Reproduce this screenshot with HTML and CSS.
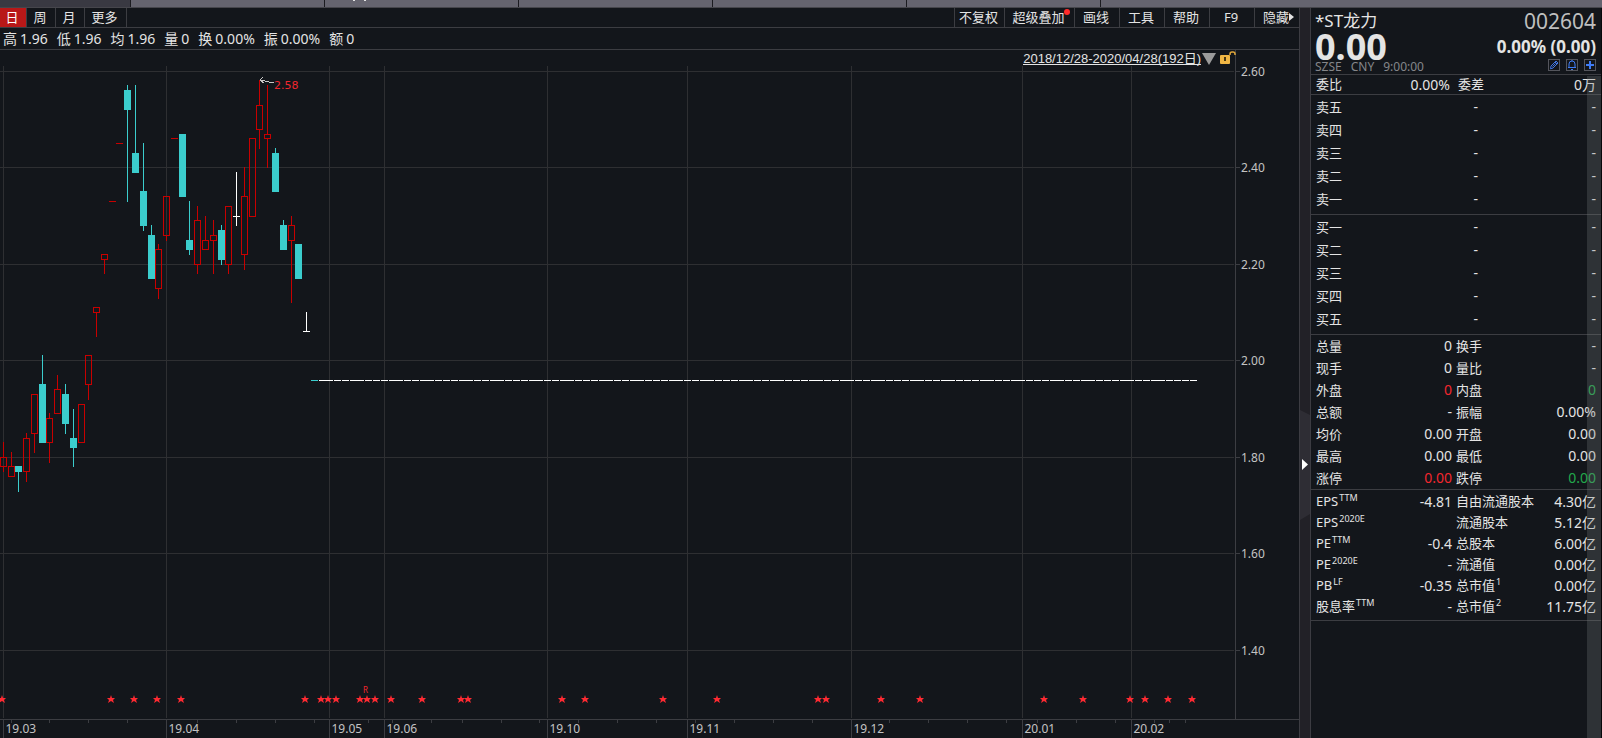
FILE: index.html
```html
<!DOCTYPE html>
<html lang="zh-CN">
  <head>
    <meta charset="UTF-8" />
    <meta name="viewport" content="width=device-width, initial-scale=1.0" />
    <title>*ST龙力 002604</title>
    <link rel="stylesheet" href="styles.css">
  </head>
  <body>
    <div class="strip">
      <span class="strip-tab first"></span>
      <span class="strip-tab"></span>
      <span class="strip-tab marked"></span>
      <span class="strip-tab"></span>
      <span class="strip-tab"></span>
      <span class="strip-tab"></span>
      <span class="strip-rest"></span>
    </div>

    <div class="workspace">
      <main class="chart-pane">
        <nav class="toolbar">
          <button type="button" class="tab active">日</button>
          <button type="button" class="tab">周</button>
          <button type="button" class="tab">月</button>
          <button type="button" class="tab wide">更多</button>
          <span class="spacer"></span>
          <button type="button" class="tool medium">不复权</button>
          <button type="button" class="tool large">超级叠加<i class="dot"></i></button>
          <button type="button" class="tool">画线</button>
          <button type="button" class="tool">工具</button>
          <button type="button" class="tool">帮助</button>
          <button type="button" class="tool">F9</button>
          <button type="button" class="tool">隐藏<i class="caret"></i></button>
        </nav>

        <div class="quote-line">
          <span>高<b>1.96</b></span>
          <span>低<b>1.96</b></span>
          <span>均<b>1.96</b></span>
          <span>量<b>0</b></span>
          <span>换<b>0.00%</b></span>
          <span>振<b>0.00%</b></span>
          <span>额<b>0</b></span>
        </div>

        <div class="chart">
          <svg id="kline" class="kline"></svg>
          <div class="range">
            <a href="#">2018/12/28-2020/04/28(192日)</a>
            <svg class="range-arrow" width="14" height="12" viewBox="0 0 14 12">
              <path d="M0 0h14L7 12z" fill="#9b9b9b" />
            </svg>
            <svg class="lock" width="16" height="14" viewBox="0 0 16 14">
              <path d="M10 4V3Q10 1 12 1h1q2 0 2 2v1" fill="none" stroke="#e0a63a" stroke-width="1.5" />
              <rect x="0" y="4" width="10" height="9" rx="1" fill="#f0b644" />
              <path d="M4 6h2v4h-2z" fill="#4a3813" />
            </svg>
          </div>
        </div>
      </main>

      <button type="button" class="splitter" aria-label="收起">
        <svg width="10" height="110" viewBox="0 0 10 110">
          <path d="M0 0l10 5v99l-10 6z" fill="#2e2d34" />
          <path d="M2 49l6 5.500-6 5.500z" fill="#fff" />
        </svg>
      </button>

      <aside class="panel">
        <header class="stock">
          <div class="stock-row">
            <h1>*ST龙力</h1>
            <span class="code">002604</span>
          </div>
          <div class="stock-row price-row">
            <strong class="price">0.00</strong>
            <strong class="change">0.00% (0.00)</strong>
          </div>
          <div class="stock-row meta-row">
            <div class="meta"><span>SZSE</span><span>CNY</span><span>9:00:00</span></div>
            <div class="actions">
              <button type="button" aria-label="编辑">
                <svg width="10" height="10" viewBox="0 0 10 10"><path d="M2 6l5-5 2 2-5 5-2.500.8zM6 2l2 2M3.500 6.500l3-3" fill="none" stroke="#3f74e0" /></svg>
              </button>
              <button type="button" aria-label="提醒">
                <svg width="10" height="10" viewBox="0 0 10 10"><path d="M1 7.500h8M2 7.500V4a3 3 0 0 1 6 0v3.500M4 9.500h2M5 0v1" fill="none" stroke="#3f7cf5" /></svg>
              </button>
              <button type="button" aria-label="添加">
                <svg width="10" height="10" viewBox="0 0 10 10"><path d="M1 5h8M5 1v8" fill="none" stroke="#3f7cf5" stroke-width="2" /></svg>
              </button>
            </div>
          </div>
        </header>

        <table class="ratio">
          <tr><th>委比</th><td>0.00%</td><th>委差</th><td>0万</td></tr>
        </table>

        <table class="book">
          <tr><th>卖五</th><td>-</td><td>-</td></tr>
          <tr><th>卖四</th><td>-</td><td>-</td></tr>
          <tr><th>卖三</th><td>-</td><td>-</td></tr>
          <tr><th>卖二</th><td>-</td><td>-</td></tr>
          <tr><th>卖一</th><td>-</td><td>-</td></tr>
        </table>

        <table class="book">
          <tr><th>买一</th><td>-</td><td>-</td></tr>
          <tr><th>买二</th><td>-</td><td>-</td></tr>
          <tr><th>买三</th><td>-</td><td>-</td></tr>
          <tr><th>买四</th><td>-</td><td>-</td></tr>
          <tr><th>买五</th><td>-</td><td>-</td></tr>
        </table>

        <table class="stats">
          <tr><th>总量</th><td>0</td><th>换手</th><td>-</td></tr>
          <tr><th>现手</th><td>0</td><th>量比</th><td>-</td></tr>
          <tr><th>外盘</th><td class="up">0</td><th>内盘</th><td class="down">0</td></tr>
          <tr><th>总额</th><td>-</td><th>振幅</th><td>0.00%</td></tr>
          <tr><th>均价</th><td>0.00</td><th>开盘</th><td>0.00</td></tr>
          <tr><th>最高</th><td>0.00</td><th>最低</th><td>0.00</td></tr>
          <tr><th>涨停</th><td class="up">0.00</td><th>跌停</th><td class="down">0.00</td></tr>
        </table>

        <table class="stats finance">
          <tr><th>EPS<sup>TTM</sup></th><td>-4.81</td><th>自由流通股本</th><td>4.30亿</td></tr>
          <tr><th>EPS<sup>2020E</sup></th><td></td><th>流通股本</th><td>5.12亿</td></tr>
          <tr><th>PE<sup>TTM</sup></th><td>-0.4</td><th>总股本</th><td>6.00亿</td></tr>
          <tr><th>PE<sup>2020E</sup></th><td>-</td><th>流通值</th><td>0.00亿</td></tr>
          <tr><th>PB<sup>LF</sup></th><td>-0.35</td><th>总市值<sup>1</sup></th><td>0.00亿</td></tr>
          <tr><th>股息率<sup>TTM</sup></th><td>-</td><th>总市值<sup>2</sup></th><td>11.75亿</td></tr>
        </table>

        <div class="scrollbar"></div>
      </aside>
    </div>

    <script src="chart.js"></script>
  </body>
</html>
```

FILE: styles.css
```css
* {
  margin: 0;
  padding: 0;
  box-sizing: border-box;
}

body {
  display: flex;
  flex-direction: column;
  height: 100vh;
  overflow: hidden;
  background: #13161b;
  color: #e4e4e4;
  font-family: "Noto Sans", "Noto Sans CJK SC", sans-serif;
  font-size: 13px;
}

button {
  background: none;
  border: none;
  color: inherit;
  font: inherit;
  cursor: pointer;
}

/* window strip */
.strip {
  display: flex;
  flex: none;
  height: 8px;
  background: #65646f;
  border-bottom: 1px solid #46464c;
}

.strip-tab {
  width: 194px;
  border-right: 1px solid #1b1b20;
}

.strip-tab.first {
  width: 131px;
  background: #393942;
}

.strip-tab.marked {
  background: linear-gradient(#e4e4e4, #e4e4e4) 28px 0 / 2px 1px no-repeat,
    linear-gradient(#e4e4e4, #e4e4e4) 39px 0 / 2px 1px no-repeat;
}

.strip-rest {
  flex: 1;
}

.workspace {
  display: flex;
  flex: 1;
  min-height: 0;
}

.chart-pane {
  display: flex;
  flex-direction: column;
  flex: 1;
  min-width: 0;
  border-right: 1px solid #3c3c42;
}

/* toolbar */
.toolbar {
  display: flex;
  height: 20px;
  border-bottom: 1px solid #3c3d42;
}

.toolbar button {
  position: relative;
  padding-right: 2px;
  line-height: 19px;
  white-space: nowrap;
}

.tab {
  width: 29px;
  border-right: 1px solid #3c3d42;
}

.tab.active {
  width: 27px;
  background: #b81818;
  color: #fff;
}

.tab.wide {
  width: 42px;
}

.spacer {
  flex: 1;
}

.tool {
  width: 45px;
  border-left: 1px solid #3c3d42;
}

.tool.medium {
  width: 50px;
}

.tool.large {
  width: 70px;
}

.dot {
  position: absolute;
  top: 1px;
  right: 4px;
  width: 6px;
  height: 6px;
  border-radius: 50%;
  background: #ff2a2a;
}

.caret {
  position: absolute;
  top: 5px;
  right: 5px;
  border: 4px solid transparent;
  border-left: 5px solid #e4e4e4;
  border-right: 0;
}

.quote-line {
  display: flex;
  gap: 9px;
  height: 22px;
  padding-left: 3px;
  border-bottom: 1px solid #3c3d42;
  font-size: 14px;
  line-height: 21px;
}

.quote-line b {
  margin-left: 3px;
  font-weight: normal;
}

/* chart */
.chart {
  position: relative;
  flex: 1;
  min-height: 0;
}

.kline {
  display: block;
  width: 100%;
  height: 100%;
  shape-rendering: crispEdges;
}

.kline text {
  fill: #c3c3c3;
  font-size: 12px;
}

.kline .peak {
  fill: #f2262e;
  font-family: "DejaVu Sans", sans-serif;
  font-size: 11px;
}

.kline .event {
  fill: #f2262e;
  font-size: 8px;
}

.grid {
  stroke: #2e2f32;
}

.axis {
  stroke: #3c3d42;
}

.rise {
  stroke: #c80000;
  fill: none;
}

.fall {
  stroke: #3bcdcd;
  fill: #3bcdcd;
}

.flat {
  stroke: #fff;
  fill: #fff;
}

.star {
  fill: #ff2a32;
  shape-rendering: auto;
}

.pointer {
  stroke: #c8c8c8;
  fill: none;
}

.range {
  position: absolute;
  top: 1px;
  right: 63px;
  display: flex;
  align-items: flex-start;
}

.range a {
  border-bottom: 1px solid #e4e4e4;
  color: #e4e4e4;
  font-family: "Liberation Sans", "Noto Sans CJK SC", sans-serif;
  line-height: 16px;
  height: 14px;
  text-decoration: none;
}

.range-arrow {
  margin: 2px 4px 0 1px;
}

/* splitter */
.splitter {
  display: flex;
  align-items: flex-end;
  width: 10px;
  padding-bottom: 218px;
  background: #222127;
}

/* right panel */
.panel {
  position: relative;
  flex: none;
  width: 292px;
  border-left: 1px solid #3c3c42;
  border-right: 1px solid #08090b;
}

.stock {
  height: 67px;
  padding: 0 5px 0 4px;
  border-bottom: 1px solid #3c3d42;
}

.stock-row {
  display: flex;
  justify-content: space-between;
}

.stock h1 {
  font-size: 17px;
  font-weight: normal;
  line-height: 25px;
}

.code {
  color: #bfbfbf;
  font-size: 21px;
  line-height: 27px;
}

.price-row {
  height: 24px;
  align-items: center;
}

.price {
  font-size: 36px;
  line-height: 24px;
}

.change {
  font-size: 17px;
  line-height: 20px;
}

.meta-row {
  height: 16px;
  align-items: center;
}

.meta {
  display: flex;
  gap: 9px;
  color: #85868a;
  font-size: 12px;
  line-height: 16px;
}

.actions {
  display: flex;
  gap: 6px;
  align-self: flex-start;
}

.actions button {
  display: flex;
  width: 12px;
  height: 12px;
  border: 1px solid #54555c;
}

table {
  width: 100%;
  border-collapse: collapse;
}

th {
  font-weight: normal;
  text-align: left;
  white-space: nowrap;
}

td {
  font-size: 14px;
  text-align: right;
  white-space: nowrap;
}

th:first-child {
  padding-left: 5px;
}

td:last-child {
  padding-right: 5px;
}

.ratio,
.book,
.stats {
  display: block;
  border-bottom: 1px solid #3c3d42;
}

.ratio tr,
.book tr,
.stats tr {
  display: grid;
  grid-template-columns: 70px 71px 1fr 60px;
  align-items: center;
}

tbody {
  display: block;
}

.ratio tr {
  height: 19px;
  grid-template-columns: 70px 69px 1fr 60px;
  line-height: 19px;
}

.ratio th:nth-child(3) {
  padding-left: 8px;
}

.book {
  padding: 0 0 4px;
}

.book tr {
  height: 23px;
  grid-template-columns: 70px 97px 1fr;
  line-height: 22px;
}

.book td {
  line-height: 24px;
}

.stats tr {
  height: 22px;
  line-height: 22px;
}

.stats th:nth-child(3) {
  padding-left: 4px;
}

.finance {
  padding: 1px 0 3px;
}

.finance tr {
  height: 21px;
  line-height: 21px;
}

sup {
  margin-left: 1px;
  font-size: 9px;
  line-height: 1;
}

.up {
  color: #f2262e;
}

.down {
  color: #22a84c;
}

.scrollbar {
  position: absolute;
  top: 68px;
  right: 0;
  bottom: 0;
  width: 14px;
  background: rgba(120, 125, 125, 0.28);
}
```

FILE: chart.js
```js
// [high, open/close top, open/close bottom, low, type]
const candles = [
  [1.83, 1.8, 1.78, 1.77, "rise"],
  [1.81, 1.78, 1.76, 1.76, "rise"],
  [1.78, 1.78, 1.77, 1.73, "fall"],
  [1.85, 1.84, 1.77, 1.75, "rise"],
  [1.93, 1.93, 1.85, 1.81, "rise"],
  [2.01, 1.95, 1.83, 1.83, "fall"],
  [1.89, 1.88, 1.83, 1.79, "rise"],
  [1.97, 1.94, 1.89, 1.89, "rise"],
  [1.95, 1.93, 1.87, 1.85, "fall"],
  [1.9, 1.84, 1.82, 1.78, "fall"],
  [1.91, 1.91, 1.83, 1.83, "rise"],
  [2.01, 2.01, 1.95, 1.92, "rise"],
  [2.11, 2.11, 2.1, 2.05, "rise"],
  [2.22, 2.22, 2.21, 2.18, "rise"],
  [2.33, 2.33, 2.33, 2.33, "rise"],
  [2.45, 2.45, 2.45, 2.45, "rise"],
  [2.57, 2.56, 2.52, 2.33, "fall"],
  [2.57, 2.43, 2.39, 2.39, "fall"],
  [2.45, 2.35, 2.28, 2.27, "fall"],
  [2.28, 2.26, 2.17, 2.17, "fall"],
  [2.24, 2.23, 2.15, 2.13, "rise"],
  [2.34, 2.34, 2.26, 2.25, "rise"],
  [2.46, 2.46, 2.46, 2.46, "rise"],
  [2.47, 2.47, 2.34, 2.34, "fall"],
  [2.33, 2.25, 2.23, 2.22, "fall"],
  [2.32, 2.29, 2.2, 2.18, "rise"],
  [2.3, 2.25, 2.23, 2.23, "rise"],
  [2.29, 2.26, 2.25, 2.18, "rise"],
  [2.28, 2.27, 2.21, 2.2, "fall"],
  [2.32, 2.32, 2.2, 2.18, "rise"],
  [2.39, 2.3, 2.3, 2.28, "flat"],
  [2.4, 2.34, 2.22, 2.19, "rise"],
  [2.46, 2.46, 2.3, 2.3, "rise"],
  [2.58, 2.53, 2.48, 2.44, "rise"],
  [2.57, 2.47, 2.46, 2.4, "rise"],
  [2.44, 2.43, 2.35, 2.35, "fall"],
  [2.29, 2.28, 2.23, 2.23, "fall"],
  [2.3, 2.28, 2.25, 2.12, "rise"],
  [2.24, 2.24, 2.17, 2.17, "fall"],
  [2.1, 2.06, 2.06, 2.06, "flat"],
  [1.96, 1.96, 1.96, 1.96, "fall"],
];
// suspended from here on
while (candles.length < 154) candles.push([1.96, 1.96, 1.96, 1.96, "flat"]);

const months = [
  [3, "19.03"], [166, "19.04"], [329, "19.05"], [384, "19.06"], [547, "19.10"],
  [687, "19.11"], [851, "19.12"], [1022, "20.01"], [1131, "20.02"],
];
const ticks = [
  11, 49, 88, 127, 197, 236, 275, 314, 368, 392, 431, 462, 501, 539, 578, 617,
  656, 695, 734, 773, 812, 889, 928, 967, 1006, 1037, 1076, 1115, 1154, 1169, 1185,
];
const stars = [
  2, 111, 134, 157, 181, 305, 321, 328, 336, 360, 367, 375, 391, 422, 461, 468,
  562, 585, 663, 717, 818, 826, 881, 920, 1044, 1083, 1130, 1145, 1168, 1192,
];
const prices = [2.6, 2.4, 2.2, 2.0, 1.8, 1.6, 1.4];

const svg = document.getElementById("kline");

function draw() {
  const width = svg.clientWidth;
  const height = svg.clientHeight;
  const right = width - 64;
  const bottom = height - 19;
  const sx = right / 1235;
  const px = (x) => Math.floor(x * sx);
  const py = (p) => Math.round(((20.8 + (2.6 - p) * 482.5) * bottom) / 669);
  const line = (x1, y1, x2, y2, cls) =>
    `<line x1="${x1}" y1="${y1}" x2="${x2}" y2="${y2}" class="${cls}"/>`;
  let out = "";

  prices.forEach((p) => {
    const y = py(p) + 0.5;
    out += line(0, y, right - 1, y, "grid");
    out += line(right + 1, y, right + 5, y, "axis");
    out += `<text x="${right + 6}" y="${y + 4}">${p.toFixed(2)}</text>`;
  });

  months.forEach(([x, label]) => {
    const gx = px(x) + 0.5;
    out += line(gx, 16, gx, bottom - 1, "grid");
    out += line(gx, bottom, gx, height, "axis");
    out += `<text x="${gx + 2}" y="${height - 5}">${label}</text>`;
  });
  ticks.forEach((x) => {
    out += line(px(x) + 0.5, bottom, px(x) + 0.5, bottom + 4, "axis");
  });
  out += line(right + 0.5, 0, right + 0.5, bottom, "axis");
  out += line(0, bottom + 0.5, width, bottom + 0.5, "axis");

  candles.forEach(([high, top, low2, low, type], i) => {
    const c = px(3.3 + 7.776 * i);
    const x = c + 0.5;
    const y1 = py(top);
    const y2 = py(low2);
    if (high > top) out += line(x, py(high), x, y1, type);
    if (low < low2) out += line(x, y2 + 1, x, py(low) + 1, type);
    if (y1 === y2) {
      out += line(c - 3, y1 + 0.5, c + 4, y1 + 0.5, type);
    } else {
      out += `<rect x="${c - 2.5}" y="${y1 + 0.5}" width="6" height="${y2 - y1}" class="${type}"/>`;
    }
  });

  // highest price marker
  const hx = px(260);
  const hy = py(2.58);
  out += `<path d="M${hx} ${hy}l14 3M${hx + 3} ${hy - 3}l-3 3l4 3" class="pointer"/>`;
  out += `<text x="${hx + 14}" y="${hy + 9}" class="peak">2.58</text>`;

  stars.forEach((x) => {
    out += `<path transform="translate(${px(x)} ${bottom - 20})" d="M0-4L1-1H4L2 1L3 4L0 2L-3 4L-2 1L-4-1H-1Z" class="star"/>`;
  });
  out += `<text x="${px(363)}" y="${bottom - 26}" class="event">R</text>`;

  svg.innerHTML = out;
}

draw();
window.addEventListener("resize", draw);
```
